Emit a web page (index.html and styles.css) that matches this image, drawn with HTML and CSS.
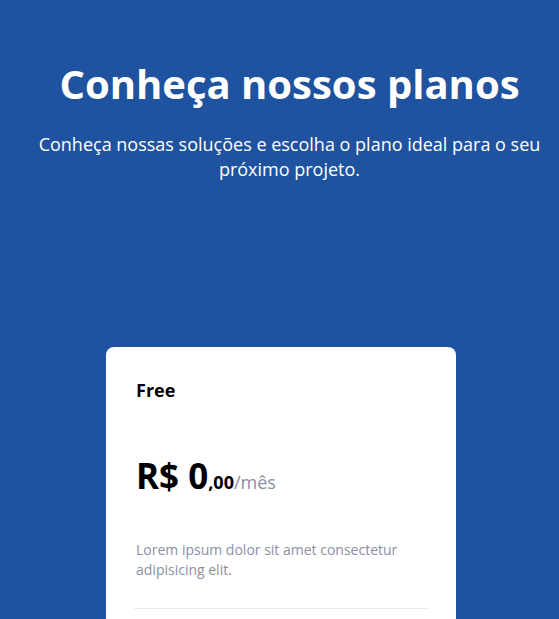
FILE: index.html
```html
<!DOCTYPE html>
<html lang="pt-BR">
<head>
<meta charset="utf-8">
<title>Planos</title>
<link rel="stylesheet" href="styles.css">
</head>
<body>
<section class="pricing">
  <header class="intro">
    <h1 class="intro-title">Conheça nossos planos</h1>
    <p class="intro-text">Conheça nossas soluções e escolha o plano ideal para o seu próximo projeto.</p>
  </header>
  <div class="plans">
    <article class="plan">
      <h2 class="plan-name">Free</h2>
      <p class="plan-price"><span class="price-main">R$ 0</span><span class="price-cents">,00</span><span class="price-period">/mês</span></p>
      <p class="plan-desc">Lorem ipsum dolor sit amet consectetur adipisicing elit.</p>
      <hr class="plan-divider">
    </article>
  </div>
</section>
</body>
</html>
```
FILE: styles.css
```css
html, body {
  margin: 0;
  padding: 0;
}
body {
  background: #1f529f;
  font-family: "Open Sans", "Noto Sans", sans-serif;
  overflow: hidden;
}
.pricing {
  padding: 56px 0 0 20px;
}
.intro {
  text-align: center;
  color: #fff;
}
.intro-title {
  margin: 0;
  font-size: 40px;
  font-weight: 700;
  line-height: 56px;
}
.intro-text {
  margin: 20px auto 0;
  font-size: 18px;
  line-height: 25px;
  max-width: 530px;
}
.plans {
  display: flex;
  justify-content: center;
  margin-top: 165px;
  padding-right: 17px;
}
.plan {
  width: 350px;
  box-sizing: border-box;
  background: #fff;
  border-radius: 8px;
  padding: 31px 27px 0 28px;
  min-height: 300px;
}
.plan-name {
  margin: 0 0 0 2px;
  font-size: 18px;
  line-height: 24px;
  font-weight: 700;
  color: #000;
}
.plan-price {
  margin: 51px 0 0 2px;
  font-size: 35px;
  line-height: 46px;
  color: #000;
}
.price-main {
  font-weight: 700;
}
.price-cents {
  font-size: 18px;
  line-height: 1;
  font-weight: 700;
}
.price-period {
  font-size: 18px;
  line-height: 1;
  color: #8a8fa3;
}
.plan-desc {
  margin: 41px 0 0 2px;
  font-size: 14px;
  line-height: 20px;
  color: #8a8fa3;
}
.plan-divider {
  margin: 28px 0 0;
  border: 0;
  border-top: 1px solid #ececec;
}
```
